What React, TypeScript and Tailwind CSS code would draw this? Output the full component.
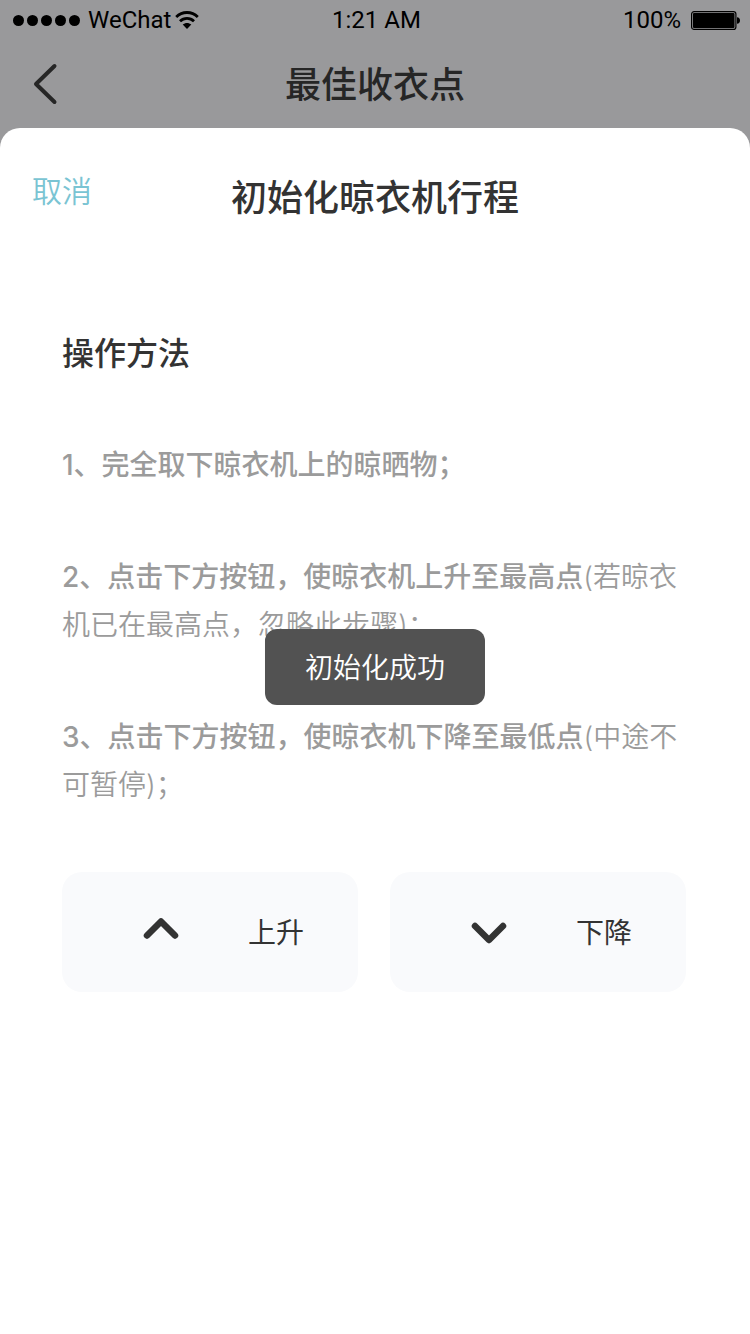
import React, { useState } from 'react'

interface Step {
  id: number
  main: string
  note?: string
}

type Direction = 'up' | 'down'

const steps: Step[] = [
  { id: 1, main: '完全取下晾衣机上的晾晒物；' },
  { id: 2, main: '点击下方按钮，使晾衣机上升至最高点', note: '(若晾衣机已在最高点，忽略此步骤)；' },
  { id: 3, main: '点击下方按钮，使晾衣机下降至最低点', note: '(中途不可暂停)；' },
]

const controls: Array<{ direction: Direction; label: string }> = [
  { direction: 'up', label: '上升' },
  { direction: 'down', label: '下降' },
]

function WifiIcon() {
  return (
    <svg width="24" height="18" viewBox="0 0 24 18" fill="none" stroke="#000" strokeWidth="2.8">
      <path d="M1.2 6C7.2 0 16.8 0 22.8 6" />
      <path d="M5 10.2C9 6.3 15 6.3 19 10.2" />
      <path d="M12 18L7.7 13.6C10.2 11.4 13.8 11.4 16.3 13.6Z" fill="#000" stroke="none" />
    </svg>
  )
}

function BatteryIcon() {
  return (
    <svg width="49" height="19" viewBox="0 0 49 19" fill="none">
      <rect x="0.6" y="0.6" width="44.3" height="17.8" rx="2.5" stroke="#000" strokeWidth="1.2" />
      <rect x="2" y="2" width="41.5" height="15" rx="1" fill="#000" />
      <path d="M46 6.3C50 6.3 50 12.7 46 12.7Z" fill="#000" />
    </svg>
  )
}

function StatusBar() {
  return (
    <div className="grid h-10 grid-cols-3 items-center pl-[13px] pr-[10px] font-[Roboto,sans-serif] text-2xl text-black">
      <div className="flex items-center">
        <div className="flex gap-[3px]">
          {[0, 1, 2, 3, 4].map((dot) => (
            <span key={dot} className="h-[11px] w-[11px] rounded-full bg-black" />
          ))}
        </div>
        <span className="ml-2 mr-1">WeChat</span>
        <WifiIcon />
      </div>
      <div className="text-center">1:21 AM</div>
      <div className="flex items-center justify-end gap-2.5">
        <span>100%</span>
        <BatteryIcon />
      </div>
    </div>
  )
}

function Chevron({ direction }: { direction: Direction }) {
  return (
    <svg
      width="36"
      height="32"
      viewBox="0 0 36 32"
      fill="none"
      stroke="#333"
      strokeWidth="6.5"
      strokeLinecap="round"
      strokeLinejoin="round"
    >
      <path d={direction === 'up' ? 'M4 18.5L18 4.5L32 18.5' : 'M4 9L18 23L32 9'} />
    </svg>
  )
}

export default function App() {
  const [toast, setToast] = useState('初始化成功')

  return (
    <div className="flex min-h-screen flex-col bg-[#99999b] font-[Inter,'Noto_Sans_CJK_SC',sans-serif]">
      <StatusBar />

      <header className="grid h-22 grid-cols-[80px_1fr_80px] items-center text-[#262626]">
        <button aria-label="返回" className="pl-8">
          <svg
            width="26"
            height="42"
            viewBox="0 0 26 42"
            fill="none"
            stroke="currentColor"
            strokeWidth="4"
            strokeLinecap="round"
            strokeLinejoin="round"
          >
            <path d="M22.5 3L4 21L22.5 39" />
          </svg>
        </button>
        <h1 className="pt-0.5 text-center text-4xl font-medium">最佳收衣点</h1>
      </header>

      <main className="flex-1 rounded-t-[20px] bg-white">
        <div className="grid grid-cols-[1fr_auto_1fr] items-center px-8 pt-10">
          <button
            onClick={() => setToast('')}
            className="justify-self-start pb-3 text-3xl font-[350] text-[#7ac4d3]"
          >
            取消
          </button>
          <h2 className="pt-0.5 text-4xl leading-14 font-medium text-[#333]">初始化晾衣机行程</h2>
        </div>

        <section className="pt-26 pr-16 pl-[62px]">
          <h3 className="text-[32px] leading-12 font-medium text-[#333]">操作方法</h3>

          <div className="mt-[63px] space-y-16 text-[28px] leading-12 text-[#9b9b9b]">
            {steps.map((step) => (
              <p key={step.id} className="font-[350]">
                <span className="font-medium">{`${step.id}、${step.main}`}</span>
                {step.note}
              </p>
            ))}
          </div>

          <div className="mt-[63px] grid grid-cols-2 gap-8">
            {controls.map(({ direction, label }) => (
              <button
                key={direction}
                onClick={() => setToast('初始化成功')}
                className="flex h-30 items-center justify-between rounded-[20px] bg-[#f9fafc] pt-0.5 pr-[54px] pl-[81px] text-[28px] text-[#333]"
              >
                <Chevron direction={direction} />
                {label}
              </button>
            ))}
          </div>
        </section>
      </main>

      {toast && (
        <div
          role="status"
          className="fixed top-1/2 left-1/2 -translate-x-1/2 -translate-y-1/2 rounded-xl bg-[#525252] px-10 pt-[17px] pb-[15px] text-[28px] leading-11 font-[350] whitespace-nowrap text-white"
        >
          {toast}
        </div>
      )}
    </div>
  )
}
